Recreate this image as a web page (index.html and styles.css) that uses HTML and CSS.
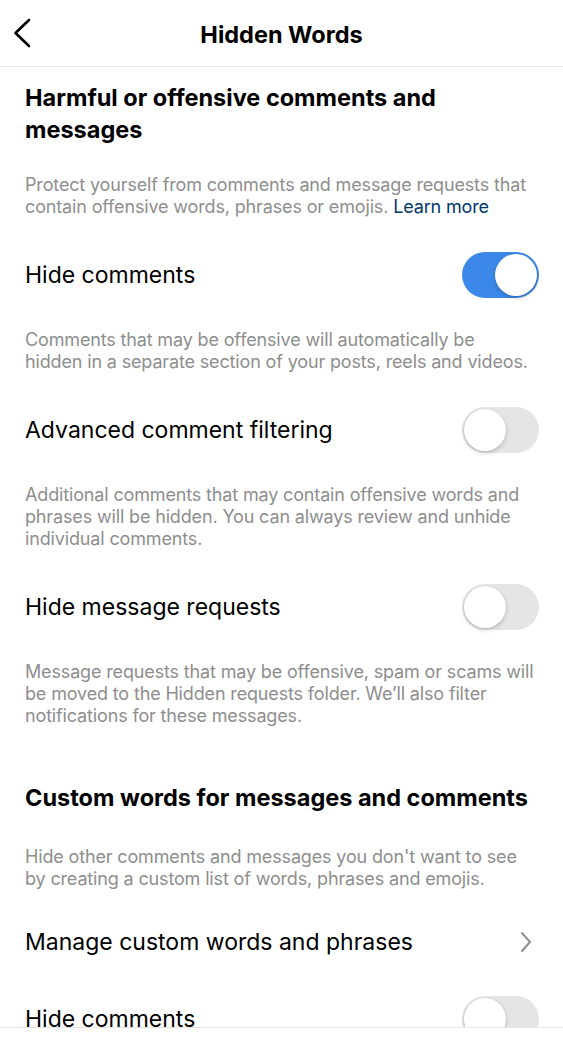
FILE: index.html
```html
<!DOCTYPE html>
<html lang="en">
<head>
<meta charset="utf-8">
<title>Hidden Words</title>
<link rel="stylesheet" href="styles.css">
</head>
<body>
<div class="screen">
  <header class="topbar">
    <svg class="back" viewBox="0 0 22 30" width="22" height="30" aria-hidden="true">
      <path d="M17 2 L3.5 15 L17 28" fill="none" stroke="#000" stroke-width="2.6" stroke-linecap="round" stroke-linejoin="round"/>
    </svg>
    <h1 class="title">Hidden Words</h1>
  </header>
  <main class="content">
    <h2 class="heading first">Harmful or offensive comments and messages</h2>
    <p class="desc">Protect yourself from comments and message requests that contain offensive words, phrases or emojis. <span class="link">Learn more</span></p>

    <div class="row"><span class="label">Hide comments</span><span class="toggle on"><span class="knob"></span></span></div>
    <p class="desc tight">Comments that may be offensive will automatically be hidden in a separate section of your posts, reels and videos.</p>

    <div class="row"><span class="label">Advanced comment filtering</span><span class="toggle"><span class="knob"></span></span></div>
    <p class="desc">Additional comments that may contain offensive words and phrases will be hidden. You can always review and unhide individual comments.</p>

    <div class="row"><span class="label">Hide message requests</span><span class="toggle"><span class="knob"></span></span></div>
    <p class="desc">Message requests that may be offensive, spam or scams will be moved to the Hidden requests folder. We’ll also filter notifications for these messages.</p>

    <h2 class="heading second">Custom words for messages and comments</h2>
    <p class="desc">Hide other comments and messages you don't want to see by creating a custom list of words, phrases and emojis.</p>

    <div class="row nav"><span class="label">Manage custom words and phrases</span>
      <svg class="chev" viewBox="0 0 14 22" width="14" height="22" aria-hidden="true">
        <path d="M3 2 L11 11 L3 20" fill="none" stroke="#8e8e8e" stroke-width="2" stroke-linecap="round" stroke-linejoin="round"/>
      </svg>
    </div>

    <div class="row last"><span class="label">Hide comments</span><span class="toggle"><span class="knob"></span></span></div>
  </main>
  <footer class="bottombar"></footer>
</div>
</body>
</html>
```

FILE: styles.css
```css
* { box-sizing: border-box; }
html, body { margin: 0; padding: 0; background: #fff; }
body {
  font-family: Inter, "Noto Sans", "Liberation Sans", sans-serif;
  color: #000;
  -webkit-font-smoothing: antialiased;
}
.screen {
  width: 563px;
  height: 1039px;
  display: flex;
  flex-direction: column;
  overflow: hidden;
}
.topbar {
  flex: 0 0 67px;
  position: relative;
  display: flex;
  align-items: center;
  justify-content: center;
  border-bottom: 1px solid #e6e6e6;
}
.back {
  position: absolute;
  left: 12px;
  top: 18px;
}
.title {
  margin: 0;
  font-size: 23.5px;
  font-weight: 700;
  letter-spacing: 0;
  padding-top: 2px;
}
.content {
  flex: 1 1 auto;
  overflow: hidden;
  padding: 0 24px 0 25px;
}
.heading {
  margin: 0;
  font-size: 23.5px;
  line-height: 32px;
  font-weight: 700;
  letter-spacing: 0;
  padding-right: 1px;
}
.heading.first { margin-top: 15px; margin-bottom: 28px; }
.heading.second { margin-top: 55px; margin-bottom: 32px; }
.desc {
  margin: 0;
  font-size: 18px;
  line-height: 22px;
  color: #8e8e8e;
  letter-spacing: -0.15px;
}
.desc.tight { padding-right: 5px; }
.link { color: #00376b; }
.row {
  display: flex;
  align-items: center;
  justify-content: space-between;
  height: 46px;
  margin-top: 34px;
  margin-bottom: 31px;
}
.row.nav { margin-top: 29px; margin-bottom: 31px; }
.row.last { margin-top: 31px; }
.label {
  font-size: 23px;
  letter-spacing: 0;
}
.chev { margin-right: 6px; }
.toggle {
  width: 77px;
  height: 46px;
  border-radius: 23px;
  background: #e5e5e5;
  padding: 2px;
  display: flex;
  justify-content: flex-start;
}
.toggle.on {
  background: #3b88e8;
  justify-content: flex-end;
}
.knob {
  width: 42px;
  height: 42px;
  border-radius: 50%;
  background: #fff;
  box-shadow: 0 2px 4px rgba(0, 0, 0, 0.18), 0 0 0 0.5px rgba(0, 0, 0, 0.06);
}
.bottombar {
  flex: 0 0 12px;
  background: #fff;
  border-top: 1px solid #e6e6e6;
}
```
